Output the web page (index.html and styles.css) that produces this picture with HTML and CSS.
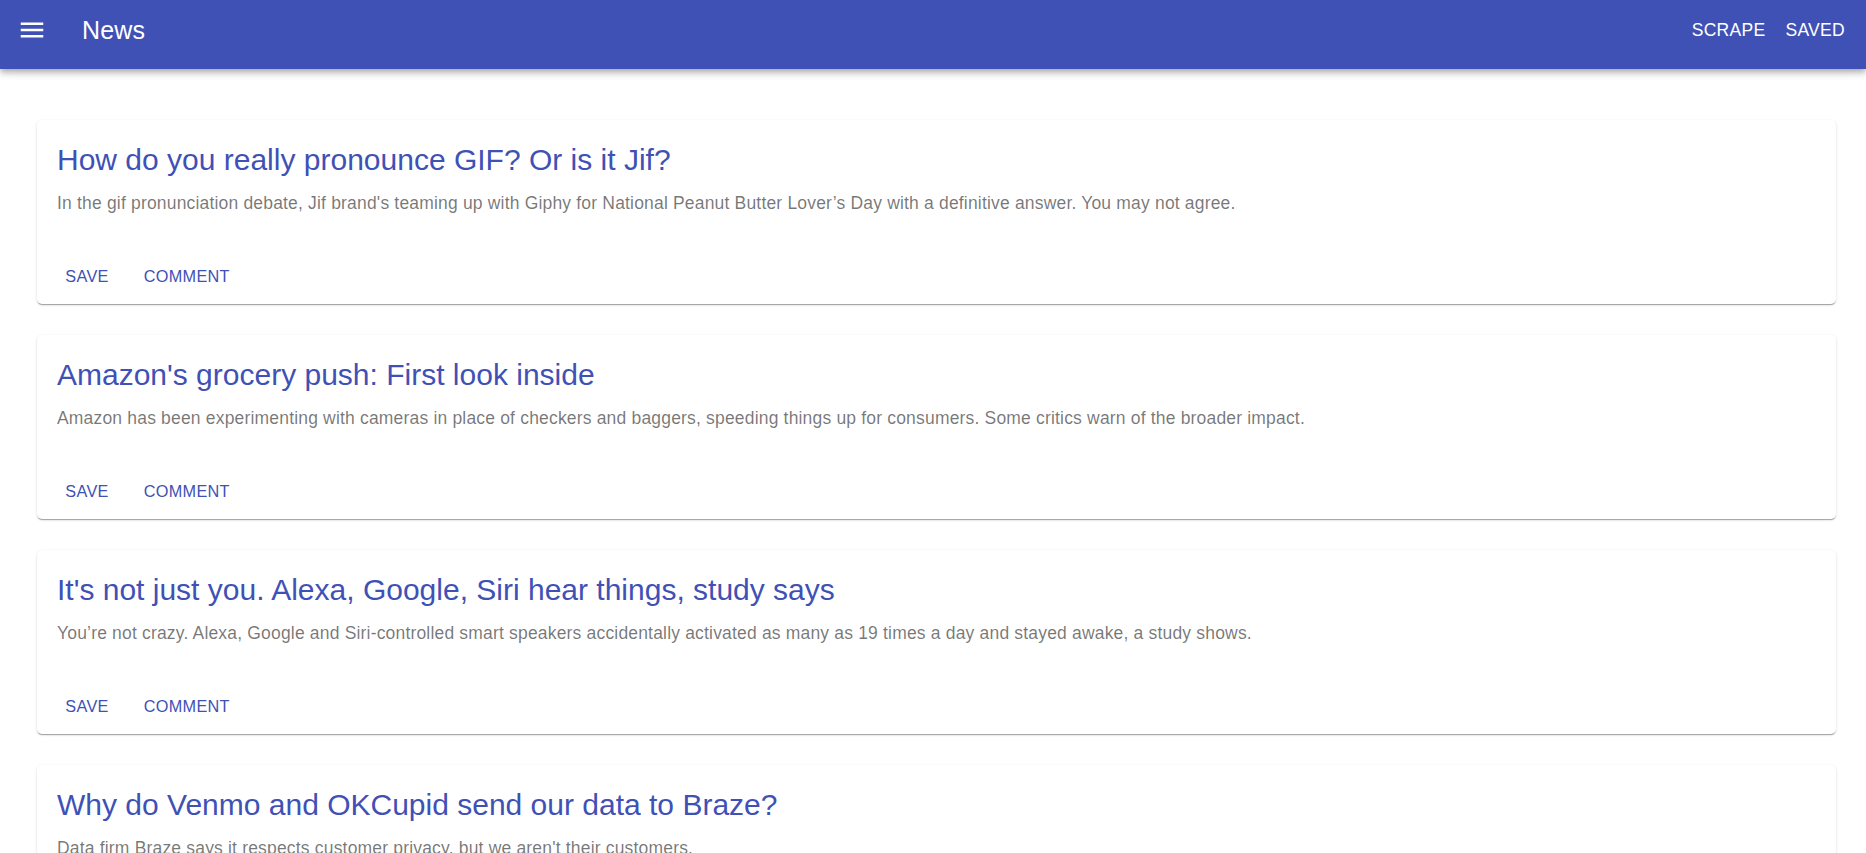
FILE: index.html
```html
<!DOCTYPE html>
<html lang="en">
<head>
<meta charset="utf-8">
<title>News</title>
<link rel="stylesheet" href="styles.css">
</head>
<body>
<header class="appbar">
  <div class="toolbar">
    <button class="menu-btn" aria-label="menu">
      <svg class="menu-icon" viewBox="0 0 24 24" width="30" height="30"><path fill="#fff" d="M3 18h18v-2H3v2zm0-5h18v-2H3v2zm0-7v2h18V6H3z"/></svg>
    </button>
    <h1 class="title">News</h1>
    <nav class="nav">
      <a class="nav-link">SCRAPE</a>
      <a class="nav-link">SAVED</a>
    </nav>
  </div>
</header>
<main class="feed">
  <article class="card">
    <div class="card-content">
      <h2 class="card-title">How do you really pronounce GIF? Or is it Jif?</h2>
      <p class="card-desc">In the gif pronunciation debate, Jif brand's teaming up with Giphy for National Peanut Butter Lover’s Day with a definitive answer. You may not agree.</p>
    </div>
    <div class="card-actions">
      <button class="action">SAVE</button>
      <button class="action">COMMENT</button>
    </div>
  </article>
  <article class="card">
    <div class="card-content">
      <h2 class="card-title">Amazon's grocery push: First look inside</h2>
      <p class="card-desc">Amazon has been experimenting with cameras in place of checkers and baggers, speeding things up for consumers. Some critics warn of the broader impact.</p>
    </div>
    <div class="card-actions">
      <button class="action">SAVE</button>
      <button class="action">COMMENT</button>
    </div>
  </article>
  <article class="card">
    <div class="card-content">
      <h2 class="card-title">It's not just you. Alexa, Google, Siri hear things, study says</h2>
      <p class="card-desc">You’re not crazy. Alexa, Google and Siri-controlled smart speakers accidentally activated as many as 19 times a day and stayed awake, a study shows.</p>
    </div>
    <div class="card-actions">
      <button class="action">SAVE</button>
      <button class="action">COMMENT</button>
    </div>
  </article>
  <article class="card">
    <div class="card-content">
      <h2 class="card-title">Why do Venmo and OKCupid send our data to Braze?</h2>
      <p class="card-desc">Data firm Braze says it respects customer privacy, but we aren't their customers.</p>
    </div>
    <div class="card-actions">
      <button class="action">SAVE</button>
      <button class="action">COMMENT</button>
    </div>
  </article>
</main>
</body>
</html>
```
FILE: styles.css
```css
* { box-sizing: border-box; }
html, body { margin: 0; padding: 0; }
body {
  font-family: "Liberation Sans", Arial, sans-serif;
  background: #fff;
  color: rgba(0,0,0,0.87);
  overflow: hidden;
}
.appbar {
  position: relative;
  z-index: 2;
  height: 69px;
  background: #3f51b5;
  color: #fff;
  box-shadow: 0 2px 5px -1px rgba(0,0,0,0.2), 0 5px 6px 0 rgba(0,0,0,0.14), 0 1px 12px 0 rgba(0,0,0,0.12);
}
.toolbar {
  height: 60px;
  display: flex;
  align-items: center;
  padding: 0 11px 0 17px;
}
.menu-btn {
  background: none;
  border: 0;
  padding: 0;
  width: 30px;
  height: 30px;
  display: flex;
  cursor: pointer;
}
.menu-icon { display: block; }
.title {
  margin: 0 0 0 35px;
  font-size: 25px;
  font-weight: 500;
  line-height: 1.6;
  letter-spacing: 0.2px;
  flex: 1;
}
.nav {
  display: flex;
}
.nav-link {
  font-size: 17.5px;
  letter-spacing: 0.3px;
  line-height: 30px;
  padding: 7px 10px;
  color: #fff;
  cursor: pointer;
}
.feed {
  display: flex;
  flex-direction: column;
  gap: 31px;
  padding: 51px 30px 0 37px;
}
.card {
  background: #fff;
  border-radius: 5px;
  height: 184px;
  flex-shrink: 0;
  box-shadow: 0 2px 1px -1px rgba(0,0,0,0.2), 0 1px 1px 0 rgba(0,0,0,0.14), 0 1px 3px 0 rgba(0,0,0,0.12);
  overflow: hidden;
}
.card-content {
  padding: 20px 20px 27px;
}
.card-title {
  margin: 0 0 10.5px;
  font-size: 30px;
  font-weight: 400;
  line-height: 40px;
  letter-spacing: 0;
  color: #3f51b5;
}
.card-desc {
  margin: 0;
  font-size: 17.5px;
  line-height: 25px;
  letter-spacing: 0.18px;
  color: rgba(0,0,0,0.54);
}
.card-actions {
  display: flex;
  align-items: center;
  padding: 11px 10px 6px 10px;
  gap: 10.5px;
}
.action {
  font-family: "Liberation Sans", Arial, sans-serif;
  background: none;
  border: 0;
  color: #3f51b5;
  font-size: 16.25px;
  letter-spacing: 0.3px;
  line-height: 30px;
  padding: 7px 6.25px;
  min-width: 80px;
  cursor: pointer;
}
```
